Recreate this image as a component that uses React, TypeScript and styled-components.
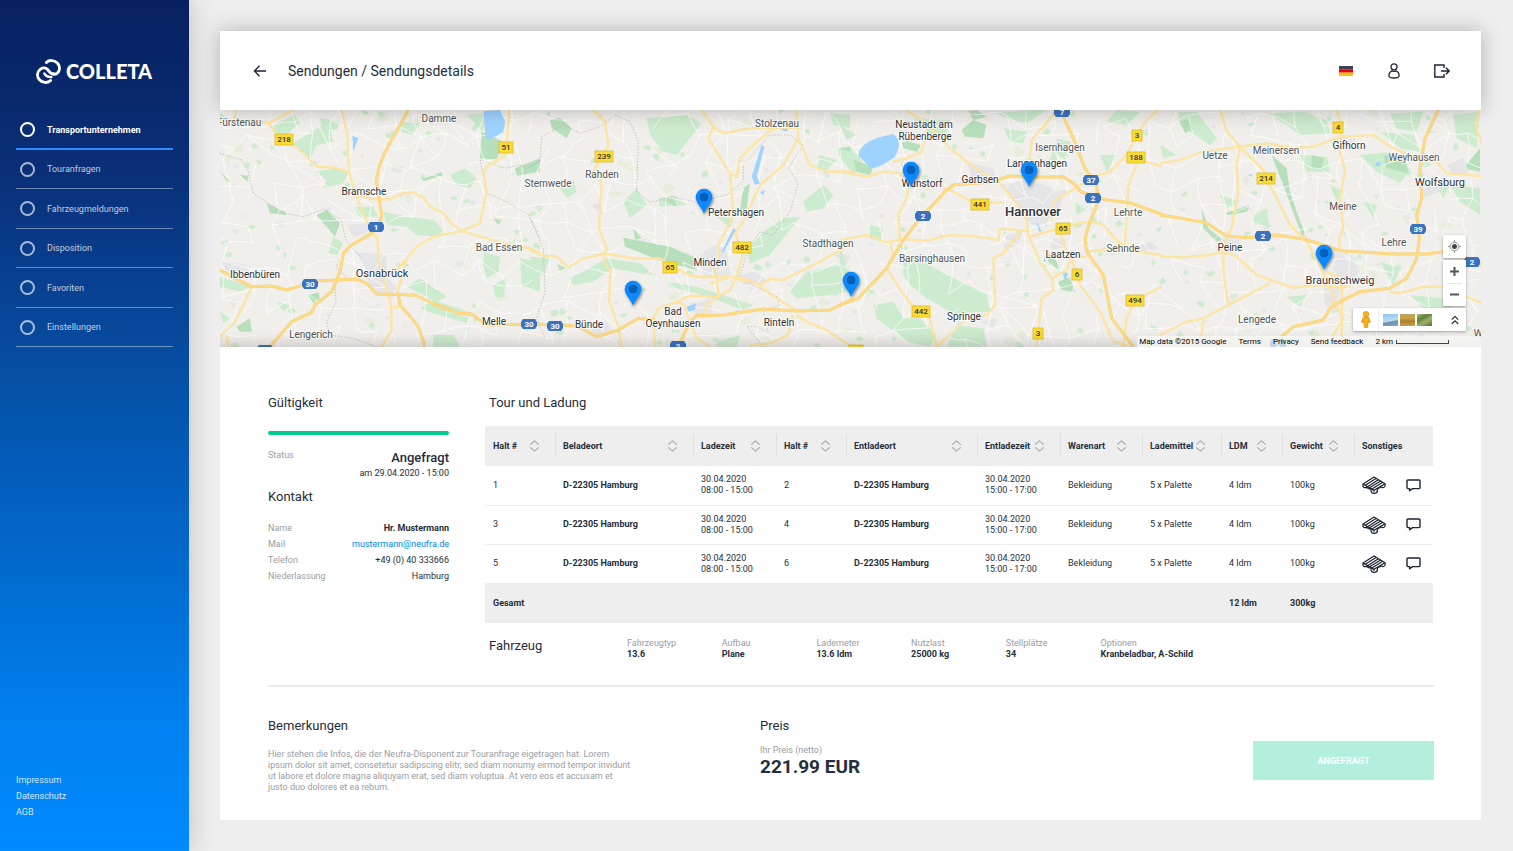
import React from 'react';
import styled, { createGlobalStyle } from 'styled-components';

const GlobalStyle = createGlobalStyle`
  *, *::before, *::after { box-sizing: border-box; }
  body {
    margin: 0;
    background: #eeeeee;
    color: #252e3b;
    font-family: Roboto, "Liberation Sans", sans-serif;
    font-size: 9px;
  }
  button { font: inherit; color: inherit; border: 0; padding: 0; background: none; cursor: pointer; }
  a { color: inherit; text-decoration: none; }
  h1, h2, p, dl, dd, ul { margin: 0; padding: 0; }
`;

/* ---------- frame ---------- */

const Page = styled.div`
  display: flex;
  min-height: 100vh;
`;

const Sidebar = styled.aside`
  flex: 0 0 189px;
  display: flex;
  flex-direction: column;
  padding: 58px 16px 31px;
  color: #fff;
  background: linear-gradient(180deg, #08205f 0%, #0a2f78 20%, #0550a6 45%, #0180f0 85%, #008aff 100%);
  box-shadow: 0 0 26px rgba(0, 0, 0, 0.2);
`;

const Logo = styled.a`
  display: flex;
  align-items: center;
  gap: 5px;
  height: 26px;
  padding-left: 20px;
  font-family: Lato, sans-serif;
  font-weight: 900;
  font-size: 20px;
  line-height: 26px;
`;

const Nav = styled.nav`
  flex: 1;
  display: flex;
  flex-direction: column;
  padding-top: 27px;
`;

const NavItem = styled.a<{ $active?: boolean }>`
  display: flex;
  align-items: center;
  gap: 12px;
  height: ${(p) => (p.$active ? 39 : 40)}px;
  padding-left: 4px;
  font-size: 9px;
  font-weight: ${(p) => (p.$active ? 700 : 400)};
  color: ${(p) => (p.$active ? '#fff' : 'rgba(255,255,255,.75)')};
  border-bottom: ${(p) => (p.$active ? '2px solid #2b8cff' : '1px solid rgba(255,255,255,.4)')};
  &:nth-child(even) { height: 39px; }
`;

const Ring = styled.span<{ $active?: boolean }>`
  width: 15px;
  height: 15px;
  border-radius: 50%;
  border: 2px solid ${(p) => (p.$active ? '#fff' : 'rgba(255,255,255,.65)')};
`;

const LegalLinks = styled.div`
  display: flex;
  flex-direction: column;
  align-items: flex-start;
  font-size: 9px;
  line-height: 16px;
  color: rgba(255, 255, 255, 0.85);
`;

const Main = styled.main`
  flex: 1;
  min-width: 0;
  padding: 31px 32px 31px 31px;
`;

const Card = styled.div`
  background: #fff;
`;

const TopBar = styled.header`
  position: relative;
  z-index: 1;
  display: flex;
  align-items: center;
  height: 79px;
  padding: 0 31px 0 33px;
  background: #fff;
  box-shadow: 0 0 20px rgba(0, 0, 0, 0.25);
`;

const PageTitle = styled.h1`
  flex: 1;
  margin-left: 21px;
  font-size: 14px;
  line-height: 18px;
  font-weight: 400;
`;

const IconButton = styled.button`
  display: grid;
  place-items: center;
`;

const IconRow = styled.div`
  display: flex;
  align-items: center;
  gap: 32px;
  ${IconButton} { width: 16px; }
`;

/* ---------- map ---------- */

const MapFrame = styled.section`
  position: relative;
  height: 237px;
  overflow: hidden;
  background: #f0efeb;
`;

const MapCanvas = styled.svg`
  display: block;
  width: 100%;
  height: 100%;
`;

const MapShade = styled.div`
  position: absolute;
  inset: 0;
  pointer-events: none;
  box-shadow: inset 0 -14px 16px -12px rgba(0, 0, 0, 0.2);
`;

const MapControls = styled.div`
  position: absolute;
  right: 15px;
  bottom: 16px;
  display: flex;
  flex-direction: column;
  align-items: flex-end;
  gap: 2px;
`;

const ControlBox = styled.div`
  display: flex;
  flex-direction: column;
  align-items: center;
  width: 23px;
  background: #fff;
  border-radius: 1px;
  box-shadow: 0 1px 3px rgba(0, 0, 0, 0.35);
`;

const ControlButton = styled.button`
  display: grid;
  place-items: center;
  width: 23px;
  height: 23px;
`;

const ControlRule = styled.span`
  width: 15px;
  height: 1px;
  margin-bottom: -1px;
  background: #e6e6e6;
`;

const LayerBar = styled.div`
  display: flex;
  align-items: center;
  width: 113px;
  height: 23px;
  background: #fff;
  border-radius: 1px;
  box-shadow: 0 1px 3px rgba(0, 0, 0, 0.35);
`;

const PegmanButton = styled(ControlButton)`
  width: 26px;
  border-right: 1px solid #f0f0f0;
`;

const Thumbs = styled.div`
  flex: 1;
  display: flex;
  gap: 2px;
  padding-left: 4px;
`;

const Thumb = styled.button<{ $fill: string }>`
  width: 15px;
  height: 12px;
  background: ${(p) => p.$fill};
`;

const MapCredits = styled.div`
  position: absolute;
  right: 0;
  bottom: 0;
  display: flex;
  align-items: center;
  gap: 12px;
  height: 11px;
  padding: 0 32px 0 2px;
  color: #000;
  font-size: 8px;
  line-height: 11px;
  background: rgba(248, 248, 246, 0.75);
`;

const Scale = styled.span`
  display: flex;
  align-items: center;
  gap: 3px;
  &::after {
    content: '';
    width: 53px;
    height: 4px;
    border: 1px solid #444;
    border-top: 0;
  }
`;

/* ---------- content ---------- */

const Content = styled.div`
  padding: 48px 47px 27px 48px;
`;

const Columns = styled.div`
  display: flex;
  gap: 36px;
`;

const Side = styled.section`
  flex: 0 0 181px;
`;

const TourSection = styled.section`
  flex: 1;
  min-width: 0;
  padding-right: 2px;
`;

const Heading = styled.h2<{ $inset?: boolean }>`
  padding-left: ${(p) => (p.$inset ? 4 : 0)}px;
  font-size: 13px;
  line-height: 16px;
  font-weight: 400;
`;

const ValidityBar = styled.div`
  height: 4px;
  margin: 20px 0 15px;
  border-radius: 2px;
  background: #00cc8f;
`;

const StatusRow = styled.div`
  display: flex;
  justify-content: space-between;
  margin-bottom: 8px;
`;

const Muted = styled.span`
  color: #999da3;
  font-size: 9px;
  line-height: 11px;
`;

const StatusValue = styled.div`
  text-align: right;
  font-size: 9px;
  line-height: 15px;
  strong {
    display: block;
    font-size: 13px;
    line-height: 16px;
    font-weight: 500;
  }
`;

const ContactList = styled.dl`
  margin-top: 15px;
  font-size: 9px;
  line-height: 16px;
  div { display: flex; justify-content: space-between; }
  dt { color: #999da3; }
  a { color: #0084f0; }
  strong { font-weight: 700; }
`;

const Table = styled.table`
  width: 100%;
  margin-top: 15px;
  table-layout: fixed;
  border-collapse: collapse;
  font-size: 9px;
  line-height: 11px;
  text-align: left;
`;

const HeadCell = styled.th`
  position: relative;
  height: 40px;
  padding: 0 0 0 8px;
  white-space: nowrap;
  background: #eeeeee;
  & + &::before {
    content: '';
    position: absolute;
    left: 0;
    top: 8px;
    height: 23px;
    border-left: 1px solid #e0e0e0;
  }
`;

const HeadInner = styled.div`
  display: flex;
  align-items: center;
  justify-content: space-between;
  padding-right: 15px;
`;

const SortButton = styled.button`
  display: block;
  width: 11px;
  height: 12px;
`;

const BodyRow = styled.tr`
  & + & td { border-top: 1px solid #eeeeee; }
`;

const Cell = styled.td<{ $bold?: boolean }>`
  height: 39px;
  padding: 0 0 0 8px;
  font-weight: ${(p) => (p.$bold ? 700 : 400)};
`;

const ActionCell = styled.div`
  display: flex;
  align-items: center;
  gap: 20px;
`;

const TotalCell = styled(Cell)`
  height: 40px;
  font-weight: 700;
  background: #eeeeee;
`;

const Vehicle = styled.div`
  display: flex;
  align-items: flex-start;
  margin-top: 15px;
`;

const VehicleHeading = styled(Heading)`
  flex: 0 0 142px;
`;

const Specs = styled.dl`
  flex: 1;
  display: grid;
  grid-template-columns: repeat(5, 2fr) 7fr;
  font-size: 9px;
  line-height: 11px;
  dt { color: #999da3; }
  dd { font-weight: 700; white-space: nowrap; }
`;

const Bottom = styled.div`
  display: grid;
  grid-template-columns: 492fr 493fr 181px;
  margin-top: 25px;
  padding-top: 31px;
  border-top: 2px solid #ececec;
`;

const Remarks = styled.p`
  max-width: 366px;
  margin-top: 15px;
  color: #999da3;
  font-size: 9px;
  line-height: 11px;
`;

const Price = styled.div`
  display: flex;
  flex-direction: column;
  margin-top: 11px;
  strong {
    font-size: 19px;
    line-height: 22px;
    font-weight: 700;
  }
`;

const RequestButton = styled.button`
  height: 39px;
  margin-top: 23px;
  color: #fff;
  font-size: 9px;
  font-weight: 700;
  background: #b2efdd;
`;

/* ---------- icons ---------- */

const LogoMark = () => (
  <svg width="25" height="25" viewBox="0 0 72 72" fill="none" stroke="#fff" strokeWidth="8.5" strokeLinecap="round" aria-hidden="true">
    <path d="M42 62 C34 70 18 69 10 60 C2 50 3 38 11 31 C18 24 28 25 34 31 C38 36 42 43 50 43" />
    <path d="M30 10 C38 2 54 3 62 12 C70 22 69 34 61 41 C57 45 54 44 50 43" />
    <path d="M24 42 C29 50 35 53 44 52" strokeWidth="7" />
  </svg>
);

const BackIcon = () => (
  <svg width="14" height="12" viewBox="0 0 14 12" fill="none" stroke="#1d2533" strokeWidth="1.4">
    <path d="M13 6 H1.4 M6.6 .8 L1.4 6 L6.6 11.2" />
  </svg>
);

const FlagIcon = () => (
  <svg width="14" height="10" viewBox="0 0 14 10">
    <path fill="#3d4350" d="M0 0h14v3.4H0z" />
    <path fill="#e8000b" d="M0 3.3h14v3.4H0z" />
    <path fill="#ffbe0a" d="M0 6.6h14V10H0z" />
  </svg>
);

const UserIcon = () => (
  <svg width="12" height="16" viewBox="0 0 12 16" fill="none" stroke="#1d2533" strokeWidth="1.3">
    <circle cx="6" cy="3.8" r="3" />
    <path d="M3.8 7.7 C1.8 8.8 .9 10.5 .9 12.5 C.9 14.2 2 15 6 15 C10 15 11.1 14.2 11.1 12.5 C11.1 10.5 10.2 8.8 8.2 7.7 C7 8.5 5 8.5 3.8 7.7Z" />
  </svg>
);

const LogoutIcon = () => (
  <svg width="16" height="14" viewBox="0 0 16 14" fill="none" stroke="#1d2533" strokeWidth="1.4">
    <path d="M10 4 V1 H.8 V13 H10 V10 M7 7 H15 M12 3.8 L15.2 7 L12 10.2" />
  </svg>
);

const SortIcon = () => (
  <svg width="11" height="12" viewBox="0 0 11 12" fill="none" stroke="#a6a6a6" strokeWidth="1.1">
    <path d="M1.2 4.6 L5.5 .9 L9.8 4.6 M1.2 7.4 L5.5 11.1 L9.8 7.4" />
  </svg>
);

const PalletIcon = () => (
  <svg width="24" height="18" viewBox="0 0 72 54" fill="none" stroke="#1d2533" strokeWidth="3.8" strokeLinejoin="round">
    <path d="M3 24 L36 3 L69 23 L36 43 Z" />
    <path d="M10 28 L43 7 M17 32 L49 11 M23 35 L56 15 M30 39 L62 19" />
    <path d="M3 24 V31 C4 35 9 36 13 34 L19 31 M13 34 L22 39 L27 37" />
    <path d="M69 23 V30 C68 35 62 36 58 33 L54 31 M58 33 L46 39" />
    <path d="M27 37 V45 C28 50 33 52 36 52 C41 52 46 49 46 44 V37 M36 42 V47" />
  </svg>
);

const CommentIcon = () => (
  <svg width="15" height="13" viewBox="0 0 15 13" fill="none" stroke="#1d2533" strokeWidth="1.4" strokeLinejoin="round">
    <path d="M2 1 H13 Q14 1 14 2 V8.6 Q14 9.6 13 9.6 H6.6 L3.6 11.8 V9.6 H2 Q1 9.6 1 8.6 V2 Q1 1 2 1Z" />
  </svg>
);

/* ---------- map data ---------- */

// Roads are drawn per map tile, in tile units of a third of a pixel.
type Tile = { x: number; motorways: string[]; roads: string[]; woods: string[]; darkWoods: string[]; towns: string[]; water: string[]; borders: string[] };

const tiles: Tile[] = [
  {
    x: 0,
    motorways: [
      'M565 15C540 70 470 160 470 230L480 300L485 330L475 365L455 385L395 420L370 445L360 500L335 560L285 600L275 622L215 650L150 725',
      'M0 495L45 520L95 545L155 543L200 555L250 540L300 527L410 522L440 535L470 567L585 570L650 600L715 625L755 627L800 660L960 657',
      'M535 570L540 600L575 640L595 665L615 725',
    ],
    roads: [
      'M365 15L382 90L387 200L400 250L440 350L455 385L472 400L476 470L500 550L513 600L515 675L485 725',
      'M0 50L100 45L145 55L220 15M45 15V45M145 55L190 110L230 125L290 185L345 188L385 200',
      'M405 270L470 283L510 283L550 265L580 262L610 278L630 305L665 320L695 355L725 378L800 400L850 415L930 430L960 445',
      'M868 15L865 60L857 150L800 185L790 200L800 260L780 355L725 378L640 395L590 425L560 460L530 570M560 460L530 495L490 505M515 608L540 605',
      'M95 545L75 590L45 650L0 695M20 690L25 725',
    ],
    woods: [
      'M160 60L225 30L240 55L190 95L165 85Z', 'M220 115L300 65L330 70L340 110L290 120L270 165L235 135Z', 'M300 40L360 50L350 75L305 65Z',
      'M285 200L350 190L385 205L370 235L310 250L320 225Z', 'M490 320L560 335L640 345L670 375L655 395L590 390L560 365L500 360Z',
      'M400 305L460 305L475 335L420 335Z', 'M340 395L370 415L350 450L325 445Z', 'M560 545L600 520L640 545L680 575L650 590L590 560Z',
      'M600 610L640 585L760 625L740 655L690 640L640 625Z', 'M790 440L840 455L835 500L800 520L790 480Z', 'M900 460L960 470V560L905 540Z',
      'M0 515L90 545L60 560L0 545Z', 'M540 50L600 55L575 90L545 80Z', 'M760 60L800 20L790 80Z', 'M690 210L735 190L770 220L750 250L710 240Z',
      'M0 620L30 640L10 655Z', 'M740 30L790 25L780 70Z', 'M820 540L860 520L850 580L825 575Z', 'M170 590L210 600L190 620Z', 'M640 690L700 690L720 725H640Z',
    ],
    darkWoods: [
      'M290 330L320 315L360 355L345 395Z', 'M140 295L195 320L200 330L150 325Z', 'M785 80L850 110L830 165L780 160Z', 'M605 222L665 202L668 212L610 228Z',
      'M265 570L295 562L300 580L280 595Z', 'M50 665L90 640L95 680L60 680Z', 'M0 200L28 225L25 235Z', 'M885 190L960 160V200L890 212Z', 'M60 210L85 212L82 230Z', 'M820 340L845 345L835 360Z',
    ],
    towns: ['M440 520L500 515L540 560L520 580L470 565Z', 'M380 360L450 355L440 385L400 395Z', 'M515 180L550 185L540 205L515 200Z', 'M0 465L80 480L90 510L20 500Z', 'M400 440L500 450L500 500L450 510Z'],
    water: ['M790 18L840 15L855 50L850 80L810 105L797 100Z', 'M397 92L415 98L400 140Z'],
    borders: ['M0 145L65 165L85 200L100 265L190 325L250 335L310 312L365 345L375 400L420 455M355 460L350 490L380 515L345 535L348 590L320 650L330 690L400 700L470 725M780 165L800 265L860 290L930 335L960 400M780 165L855 190L900 180L920 190L960 165'],
  },
  {
    x: 310,
    motorways: [
      'M0 657L140 662L200 695L265 675L325 640L370 645',
      'M445 725L480 650L500 632L580 630L700 612L800 618L900 615L970 582',
    ],
    roads: [
      'M190 15L225 50L235 120L195 190L215 235L207 370L230 430L220 465L240 500L238 590L265 665L275 725',
      'M0 435L40 452L80 455L115 487L160 460L225 445L310 460L390 460L440 490L480 512L520 517L590 515L640 520L690 540L720 522L760 525L850 480L940 430',
      'M375 725L370 640L385 610L440 590L480 572L565 575L560 520L548 480M565 575L600 555L620 515M565 575L530 600L520 640M440 590L462 600L480 650L500 700L540 725',
      'M515 15L550 65L535 100L600 205L610 330L565 420V465M550 65L580 85L660 70L735 68H805M800 15L805 100L840 180L890 200H970',
      'M600 205L620 215L630 160L680 110L735 68M805 100L760 180L720 215L690 240L640 350L615 385L640 440L620 515',
      'M540 535L600 515L650 530M685 540L740 580L800 618M800 630L830 650L890 675L965 725M790 630L775 690L720 715L660 720',
    ],
    woods: [
      'M350 40L470 30L515 55L480 100L440 150L400 140L360 90Z', 'M115 520L160 500L230 460L330 475L370 510L330 505L250 490L190 530L130 540Z',
      'M650 440L700 380L760 340L810 335L760 400L720 450L660 475Z', 'M820 290L880 240L910 270L880 310L830 320Z', 'M280 290L320 250L350 300L300 340Z',
      'M780 560L830 500L930 480L960 490V560L900 570L800 580Z', 'M870 150L920 165L890 195L855 190Z', 'M0 455L60 460L40 510L0 505Z',
      'M410 530L500 545L640 590L670 600L640 615L520 570L420 545Z', 'M560 335L610 340L600 370Z', 'M90 250L130 225L140 260L110 280Z', 'M385 280L430 270L470 300L390 305Z', 'M560 710L630 690L620 725H560Z', 'M900 25L960 30V70L910 60Z',
    ],
    darkWoods: ['M280 398L420 425L500 460L500 495L400 470L285 425Z', 'M60 45L90 38L125 70L110 100L65 70Z', 'M925 130L960 125V160L930 155Z', 'M310 370L335 400L315 405Z', 'M395 285L430 278L440 305Z', 'M640 250L660 235L650 310L630 320Z', 'M82 478L110 490L90 500Z'],
    towns: ['M510 450L550 420L590 430L600 510L520 515Z', 'M480 600L540 580L550 630L500 635Z', 'M160 650L230 650L250 680L200 690Z', 'M180 300L215 295L215 325Z', 'M900 440L960 450L950 480Z', 'M630 510L670 500L720 530L640 540Z'],
    water: ['M470 605L498 595L495 615L475 620Z', 'M695 120L665 215L675 240L690 235L680 215L703 125Z', 'M610 370L575 440L580 442L618 375Z', 'M755 65L775 70L770 80L755 75Z', 'M690 262L705 255L700 270Z'],
    borders: ['M0 185L30 170L35 95L100 60L150 85L210 65L255 30L300 50L325 110L320 260L360 292L430 275L500 293L590 270L640 230L640 180L720 90L780 90L820 120L775 190L805 235L780 320L730 390L690 380L650 440L640 480L625 520L740 575L750 600L700 620L715 680L680 665L650 665L700 725M0 340L40 430L45 560L20 640L45 700'],
  },
  {
    x: 620,
    motorways: [
      'M0 600L55 580L140 490L190 405L240 340L320 255L340 240L465 230L505 213L570 217L670 215L700 235L725 262L800 285L870 293L970 330',
      'M640 30L650 15M670 35L700 100L735 190L770 240L775 290L750 350L735 400L740 440L790 510L815 640L880 725',
    ],
    roads: [
      'M645 25L575 105L565 215M635 350L640 290L680 265L760 215L810 200L860 150L890 90L920 45L955 15',
      'M0 200L80 215L130 200L180 205L205 240L200 280L175 330L180 400M195 15L240 40L265 60L330 130L400 185L480 235L530 295L560 345L565 390M265 60L245 140L200 160L160 170',
      'M310 250L340 260L390 288L430 293H490M0 405L80 390L140 412L190 402L260 407L330 390L400 393L475 405L480 370L560 378',
      'M570 395L640 375L680 360L755 350L790 360L835 410L865 430M740 440L830 430L965 450',
      'M545 375L490 445L460 460L465 600L440 630L380 640L330 690L290 725M150 410L160 450L140 490L185 560L215 600L265 620L290 725',
      'M565 390L600 470L635 520L640 555L605 580L590 725M635 520L680 495L695 460L740 455M660 380L675 430L695 460L720 540L780 620L820 710',
      'M890 180L865 240L855 420M965 545L885 585L860 640L850 725M900 165L965 185M820 710L860 720',
    ],
    woods: [
      'M190 470L230 460L320 510L400 550L440 570L450 620L340 625L260 580L210 540L190 510Z', 'M100 600L160 590L190 640L240 640L290 690L270 725L200 710L110 640Z',
      'M0 130L60 150L70 190L40 205L0 160Z', 'M470 25L560 15H620L560 55L500 40Z', 'M490 70L560 80L550 115L510 110Z', 'M650 100L690 110L680 165L650 150Z',
      'M350 660L430 670L440 725H320Z', 'M0 420L20 490L60 540L0 560Z', 'M220 40L330 45L320 90L270 90Z', 'M830 15L900 20L860 60L800 50Z', 'M640 130L660 180L630 165Z', 'M0 60L50 90L20 105Z', 'M705 290L745 310L710 330Z', 'M90 360L130 370L120 410L90 400Z', 'M780 150L830 150L800 200Z',
    ],
    darkWoods: ['M365 75L400 45L440 60L430 100L375 95Z', 'M185 105L245 120L230 140L190 130Z', 'M40 165L100 185L90 210L50 200Z', 'M655 530L690 515L705 560L665 555Z', 'M620 440L650 470L660 500L625 470Z', 'M385 18L410 15L440 35L400 45Z'],
    towns: ['M380 170L460 190L470 225L400 230Z', 'M480 240L570 225L640 250L640 330L600 370L560 350L520 280Z', 'M500 390L550 380L530 420L490 440Z', 'M610 270L650 260L680 250L650 330Z', 'M640 400L680 405L670 430L630 430Z', 'M180 210L240 210L240 235L195 240Z', 'M870 430L930 410L960 430L900 445Z', 'M420 650L470 640L460 670Z'],
    water: ['M55 150Q60 105 160 87Q190 110 165 155Q110 195 90 188Z', 'M668 500L685 505L675 530Z', 'M588 345L605 380H598Z', 'M615 455L610 470L617 470Z'],
    borders: [],
  },
  {
    x: 940,
    motorways: [
      'M0 330L135 352L200 393L260 398L350 390L430 402L490 420L540 437L700 447L800 447L870 437L990 490',
      'M835 15L795 100L780 190L785 280L770 330L778 400L770 460L740 520L690 550L600 560L540 590L510 610L490 645L400 665L365 695',
    ],
    roads: [
      'M180 15L200 80L240 125L310 195L330 240L360 300L390 360L440 410L480 480L500 530L520 570L515 605',
      'M0 175L60 165L130 140L240 125L320 115L400 130L460 125L540 95L640 90L700 130L760 155L830 170L860 205L990 215',
      'M240 130L230 180L235 260L215 370L200 395L190 440L190 500L205 600M530 15L545 60L535 120L555 195L540 280L550 370L538 400V437',
      'M0 455L70 457L150 450L190 440L230 455L290 510L400 548L480 540L540 548L570 545M690 560L720 565L790 545L850 545L990 605',
      'M0 690L80 650L130 640L205 600L330 535M130 640L120 725M545 550V725M500 500L540 520L545 550M955 15L950 70L965 115M520 590L550 640L500 725',
    ],
    woods: [
      'M55 20L110 20L170 100L150 120L60 60Z', 'M320 25L430 20L500 45L510 85L420 90L380 60Z', 'M690 25L790 20L770 80L710 70Z', 'M420 150L500 155L510 200L440 200Z',
      'M600 150L700 140L750 195L720 235L650 200Z', 'M880 30L960 20L950 130L890 100Z', 'M660 80L760 90L780 140L720 130Z', 'M750 570L850 580L910 640L800 620Z',
      'M280 330L320 310L330 370L280 350Z', 'M820 220L870 240L850 280Z', 'M0 120L50 150L10 160Z', 'M660 470L720 490L700 540Z', 'M510 240L550 260L530 290Z', 'M380 575L440 570L420 605Z', 'M180 270L240 290L200 310Z', 'M870 240L960 250V330L900 290Z', 'M610 290L650 300L640 340Z',
    ],
    darkWoods: ['M335 150L380 190L390 260L410 320L440 400L425 390L395 310L370 240L350 190Z', 'M125 310L145 370L190 405L170 410L130 370Z', 'M455 150L490 160L485 195L455 190Z', 'M670 150L735 155L745 205L680 190Z', 'M910 190L960 130V200Z', 'M195 325L270 300L260 320L205 330Z', 'M60 50L80 42L100 70L75 85Z'],
    towns: ['M530 440L580 450L600 500L560 540L520 500Z', 'M490 550L540 545L530 620L495 600Z', 'M860 180L910 160L930 210L880 210Z', 'M780 250L850 215L840 260L790 280Z', 'M180 400L240 405L230 440L190 440Z', 'M520 95L590 100L560 130Z'],
    water: ['M650 172L662 170L658 184L645 182Z', 'M265 210L277 206L274 215Z'],
    borders: [],
  },
];

const MAP_W = 1261;
const MAP_H = 237;

const seeded = (seed: number) => () => {
  seed = (seed * 16807) % 2147483647;
  return seed / 2147483647;
};

// Minor lanes: neighbouring villages on a jittered grid joined by bent lines.
const lanes = (() => {
  const rnd = seeded(4711);
  const step = 21;
  const cols = Math.ceil(MAP_W / step) + 2;
  const rows = Math.ceil(MAP_H / step) + 2;
  const at: number[][][] = [];
  for (let r = 0; r < rows; r++) {
    at.push([]);
    for (let c = 0; c < cols; c++) at[r].push([(c - 0.5 + (rnd() - 0.5) * 0.9) * step, (r - 0.5 + (rnd() - 0.5) * 0.9) * step]);
  }
  const d: string[] = [];
  const join = (a: number[], b: number[]) => {
    const mx = (a[0] + b[0]) / 2 + (rnd() - 0.5) * 8;
    const my = (a[1] + b[1]) / 2 + (rnd() - 0.5) * 8;
    d.push(`M${a[0].toFixed(1)} ${a[1].toFixed(1)}Q${mx.toFixed(1)} ${my.toFixed(1)} ${b[0].toFixed(1)} ${b[1].toFixed(1)}`);
  };
  for (let r = 0; r < rows - 1; r++)
    for (let c = 0; c < cols - 1; c++) {
      if (rnd() < 0.55) join(at[r][c], at[r][c + 1]);
      if (rnd() < 0.55) join(at[r][c], at[r + 1][c]);
      if (rnd() < 0.12) join(at[r][c], at[r + 1][c + 1]);
    }
  return d.join('');
})();

const patches = (seed: number, count: number, size: number) => {
  const rnd = seeded(seed);
  let d = '';
  for (let i = 0; i < count; i++) {
    const cx = rnd() * MAP_W;
    const cy = rnd() * MAP_H;
    const n = 4 + Math.floor(rnd() * 3);
    for (let k = 0; k < n; k++) {
      const r = size * (0.4 + rnd());
      const t = (k / n) * Math.PI * 2;
      d += `${k ? 'L' : 'M'}${(cx + Math.cos(t) * r).toFixed(1)} ${(cy + Math.sin(t) * r * 0.8).toFixed(1)}`;
    }
    d += 'Z';
  }
  return d;
};

const copses = patches(99, 170, 4);
const hamlets = patches(1234, 90, 3);
const meadows = patches(777, 50, 6);

// Villages carry no size; towns and cities give their own.
type Place = [string, number, number, number?, number?];
const places: Place[] = [
  ['Fürstenau', 19, 16], ['Damme', 219, 12], ['Bramsche', 144, 85, 10], ['Osnabrück', 162, 167, 11], ['Ibbenbüren', 35, 168, 10],
  ['Lengerich', 91, 228], ['Melle', 274, 215, 10], ['Bad Essen', 279, 141], ['Stemwede', 328, 77], ['Rahden', 382, 68],
  ['Stolzenau', 557, 17], ['Petershagen', 516, 106, 10], ['Minden', 490, 156, 10], ['Bad', 453, 205, 10], ['Oeynhausen', 453, 217, 10],
  ['Bünde', 369, 218, 10], ['Rinteln', 559, 216, 10], ['Stadthagen', 608, 137], ['Neustadt am', 704, 18, 10], ['Rübenberge', 705, 30, 10],
  ['Wunstorf', 702, 77, 10], ['Garbsen', 760, 73, 10], ['Langenhagen', 817, 57, 10], ['Isernhagen', 840, 41], ['Hannover', 813, 106, 13, 500],
  ['Barsinghausen', 712, 152], ['Laatzen', 843, 148, 10], ['Springe', 744, 210, 10], ['Lehrte', 908, 106], ['Sehnde', 903, 142],
  ['Uetze', 995, 49], ['Meinersen', 1056, 44], ['Gifhorn', 1129, 39, 10], ['Weyhausen', 1194, 51], ['Wolfsburg', 1220, 76, 11],
  ['Meine', 1123, 100], ['Peine', 1010, 141, 10], ['Lehre', 1174, 136], ['Braunschweig', 1120, 174, 11], ['Lengede', 1037, 213], ['Wolfenbüttel', 1282, 227],
];

const yellowSigns: [string, number, number][] = [
  ['218', 64, 29], ['51', 286, 37], ['239', 384, 46], ['482', 522, 137], ['65', 450, 157], ['441', 760, 94], ['65', 843, 118],
  ['3', 917, 25], ['188', 916, 47], ['6', 857, 164], ['442', 701, 201], ['494', 915, 190], ['3', 818, 223], ['4', 1118, 17], ['214', 1046, 68], ['83', 636, 240],
];

const blueSigns: [string, number, number][] = [
  ['1', 156, 117], ['30', 90, 174], ['30', 309, 214], ['30', 335, 216], ['2', 458, 236], ['1', 45, 240], ['7', 842, 2], ['37', 871, 70],
  ['2', 873, 88], ['2', 703, 106], ['2', 1043, 126], ['39', 1198, 119], ['2', 1252, 152], ['2', 1058, 234],
];

const pins: [number, number][] = [[484, 104], [413, 196], [631, 187], [691, 77], [809, 77], [1104, 160]];

const TourMap = () => (
  <MapCanvas viewBox={`0 0 ${MAP_W} ${MAP_H}`} preserveAspectRatio="xMidYMid slice" role="img" aria-label="Karte">
    <defs>
      <filter id="pinShadow" x="-50%" y="-30%" width="220%" height="180%">
        <feDropShadow dx="1" dy="1.5" stdDeviation="1.4" floodColor="#000" floodOpacity=".5" />
      </filter>
    </defs>
    <rect width={MAP_W} height={MAP_H} fill="#f0efeb" />
    <path d={meadows} fill="#e7ecdb" />
    <path d={copses} fill="#cfecd0" />
    <path d={hamlets} fill="#e6e6e8" />
    {tiles.map((t) => (
      <g key={t.x} transform={`translate(${t.x} -5) scale(.33333)`}>
        <path d={t.woods.join('')} fill="#cdebcf" />
        <path d={t.darkWoods.join('')} fill="#b7dfbb" />
        <path d={t.towns.join('')} fill="#e5e5e7" />
      </g>
    ))}
    <path d={lanes} fill="none" stroke="#fff" strokeOpacity=".9" strokeWidth=".8" />
    {tiles.map((t) => (
      <g key={t.x} transform={`translate(${t.x} -5) scale(.33333)`} fill="none" strokeLinejoin="round">
        <path d={t.water.join('')} fill="#9fd3ff" />
        <path d={t.borders.join('')} stroke="#b4b6b8" strokeWidth="2.5" strokeDasharray="4 5" />
        <path d={t.roads.join('')} stroke="#fadf9a" strokeWidth="6.5" />
        <path d={t.roads.join('')} stroke="#ffe7a3" strokeWidth="4" />
        <path d={t.motorways.join('')} stroke="#f7cd74" strokeWidth="9" />
        <path d={t.motorways.join('')} stroke="#ffdc84" strokeWidth="6" />
      </g>
    ))}
    {yellowSigns.map(([n, x, y]) => (
      <g key={`${n}-${x}`}>
        <rect x={x - (n.length * 2 + 3)} y={y - 5} width={n.length * 4 + 6} height="11" fill="#fbdc35" stroke="#dcb92c" strokeWidth=".8" />
        <text x={x} y={y + 3} textAnchor="middle" fontSize="8" fontWeight="500" fill="#333">{n}</text>
      </g>
    ))}
    {blueSigns.map(([n, x, y]) => (
      <g key={`${n}-${x}`}>
        <path d={`M${x - 6} ${y - 5}H${x + 6}L${x + 8} ${y - 2}V${y + 2}L${x + 6} ${y + 5}H${x - 6}L${x - 8} ${y + 2}V${y - 2}Z`} fill="#3a72c2" />
        <text x={x} y={y + 3} textAnchor="middle" fontSize="8" fontWeight="700" fill="#fff">{n}</text>
      </g>
    ))}
    {places.map(([name, x, y, size, weight = 400]) => (
      <text key={name} x={x} y={y} textAnchor="middle" fontSize={size ?? 10} fontWeight={weight} fill={size ? '#2c3034' : '#4f5459'} stroke="#fff" strokeOpacity=".8" strokeWidth="2" paintOrder="stroke">{name}</text>
    ))}
    {pins.map(([x, y]) => (
      <g key={x} transform={`translate(${x} ${y})`}>
        <path d="M0 0C-1.5 -6 -8.3 -11 -8.3 -17A8.3 8.3 0 0 1 8.3 -17C8.3 -11 1.5 -6 0 0Z" fill="#0788ff" filter="url(#pinShadow)" />
        <circle cy="-17" r="4" fill="#0561b8" stroke="#04509a" strokeWidth=".6" />
      </g>
    ))}
  </MapCanvas>
);

/* ---------- page data ---------- */

const navItems = ['Transportunternehmen', 'Touranfragen', 'Fahrzeugmeldungen', 'Disposition', 'Favoriten', 'Einstellungen'];

const columns: [string, number][] = [
  ['Halt #', 70], ['Beladeort', 138], ['Ladezeit', 83], ['Halt #', 70], ['Entladeort', 131], ['Entladezeit', 83],
  ['Warenart', 82], ['Lademittel', 79], ['LDM', 61], ['Gewicht', 72], ['Sonstiges', 79],
];

const specs = [
  ['Fahrzeugtyp', '13.6'], ['Aufbau', 'Plane'], ['Lademeter', '13.6 ldm'], ['Nutzlast', '25000 kg'], ['Stellplätze', '34'], ['Optionen', 'Kranbeladbar, A-Schild'],
];

export default function App() {
  return (
    <>
      <GlobalStyle />
      <Page>
        <Sidebar>
          <Logo href="#"><LogoMark />COLLETA</Logo>
          <Nav>
            {navItems.map((item, i) => (
              <NavItem key={item} href="#" $active={i === 0}><Ring $active={i === 0} />{item}</NavItem>
            ))}
          </Nav>
          <LegalLinks>
            <a href="#">Impressum</a>
            <a href="#">Datenschutz</a>
            <a href="#">AGB</a>
          </LegalLinks>
        </Sidebar>
        <Main>
          <Card>
            <TopBar>
              <IconButton aria-label="Zurück"><BackIcon /></IconButton>
              <PageTitle>Sendungen / Sendungsdetails</PageTitle>
              <IconRow>
                <IconButton aria-label="Sprache"><FlagIcon /></IconButton>
                <IconButton aria-label="Profil"><UserIcon /></IconButton>
                <IconButton aria-label="Abmelden"><LogoutIcon /></IconButton>
              </IconRow>
            </TopBar>

            <MapFrame>
              <TourMap />
              <MapShade />
              <MapCredits>
                <span>Map data ©2015 Google</span>
                <a href="#">Terms</a>
                <a href="#">Privacy</a>
                <a href="#">Send feedback</a>
                <Scale>2 km</Scale>
              </MapCredits>
              <MapControls>
                <ControlBox>
                  <ControlButton aria-label="Standort">
                    <svg width="13" height="13" viewBox="0 0 13 13" fill="none" stroke="#777" strokeWidth=".8">
                      <circle cx="6.5" cy="6.5" r="4.3" />
                      <circle cx="6.5" cy="6.5" r="2.5" fill="#444" stroke="none" />
                      <path d="M6.5 0V2M6.5 11V13M0 6.5H2M11 6.5H13" />
                    </svg>
                  </ControlButton>
                </ControlBox>
                <ControlBox>
                  <ControlButton aria-label="Vergrößern">
                    <svg width="9" height="9" viewBox="0 0 9 9" stroke="#555" strokeWidth="2"><path d="M0 4.5H9M4.5 0V9" /></svg>
                  </ControlButton>
                  <ControlRule />
                  <ControlButton aria-label="Verkleinern">
                    <svg width="9" height="9" viewBox="0 0 9 9" stroke="#555" strokeWidth="2"><path d="M0 4.5H9" /></svg>
                  </ControlButton>
                </ControlBox>
                <LayerBar>
                  <PegmanButton aria-label="Street View">
                    <svg width="10" height="17" viewBox="0 0 10 17" fill="#f5b21a" stroke="#cf8a12" strokeWidth=".6">
                      <path d="M2 6.5Q5 5.2 8 6.5L9.4 11.2L8 11.8L7.2 10L6.8 16.4H3.2L2.8 10L2 11.8L.6 11.2Z" />
                      <circle cx="5" cy="3.2" r="2.8" />
                    </svg>
                  </PegmanButton>
                  <Thumbs>
                    <Thumb aria-label="Küste" $fill="linear-gradient(170deg, #8fc4ee 0%, #b9dcf3 55%, #6f93ad 65%, #8aa6b8 100%)" />
                    <Thumb aria-label="Feld" $fill="linear-gradient(180deg, #b9a768 0%, #c9a23f 35%, #a9822f 60%, #c9a04a 100%)" />
                    <Thumb aria-label="Wald" $fill="linear-gradient(150deg, #a9bd83 0%, #5f8138 35%, #9fb06f 60%, #4f7030 100%)" />
                  </Thumbs>
                  <ControlButton aria-label="Einklappen">
                    <svg width="8" height="10" viewBox="0 0 8 10" fill="none" stroke="#333" strokeWidth="1.3"><path d="M.8 4.6L4 1.4L7.2 4.6M.8 9L4 5.8L7.2 9" /></svg>
                  </ControlButton>
                </LayerBar>
              </MapControls>
            </MapFrame>

            <Content>
              <Columns>
                <Side>
                  <Heading>Gültigkeit</Heading>
                  <ValidityBar />
                  <StatusRow>
                    <Muted>Status</Muted>
                    <StatusValue><strong>Angefragt</strong>am 29.04.2020 - 15:00</StatusValue>
                  </StatusRow>
                  <Heading>Kontakt</Heading>
                  <ContactList>
                    <div><dt>Name</dt><dd><strong>Hr. Mustermann</strong></dd></div>
                    <div><dt>Mail</dt><dd><a href="mailto:mustermann@neufra.de">mustermann@neufra.de</a></dd></div>
                    <div><dt>Telefon</dt><dd>+49 (0) 40 333666</dd></div>
                    <div><dt>Niederlassung</dt><dd>Hamburg</dd></div>
                  </ContactList>
                </Side>

                <TourSection>
                  <Heading $inset>Tour und Ladung</Heading>
                  <Table>
                    <colgroup>
                      {columns.map(([name, width], i) => <col key={name + i} width={width} />)}
                    </colgroup>
                    <thead>
                      <tr>
                        {columns.map(([name], i) => (
                          <HeadCell key={name + i} scope="col">
                            <HeadInner>
                              {name}
                              {i < columns.length - 1 && <SortButton aria-label={`${name} sortieren`}><SortIcon /></SortButton>}
                            </HeadInner>
                          </HeadCell>
                        ))}
                      </tr>
                    </thead>
                    <tbody>
                      {[1, 3, 5].map((n) => (
                        <BodyRow key={n}>
                          <Cell>{n}</Cell>
                          <Cell $bold>D-22305 Hamburg</Cell>
                          <Cell>30.04.2020<br />08:00 - 15:00</Cell>
                          <Cell>{n + 1}</Cell>
                          <Cell $bold>D-22305 Hamburg</Cell>
                          <Cell>30.04.2020<br />15:00 - 17:00</Cell>
                          <Cell>Bekleidung</Cell>
                          <Cell>5 x Palette</Cell>
                          <Cell>4 ldm</Cell>
                          <Cell>100kg</Cell>
                          <Cell>
                            <ActionCell>
                              <IconButton aria-label="Palette"><PalletIcon /></IconButton>
                              <IconButton aria-label="Kommentar"><CommentIcon /></IconButton>
                            </ActionCell>
                          </Cell>
                        </BodyRow>
                      ))}
                    </tbody>
                    <tfoot>
                      <tr>
                        <TotalCell colSpan={8}>Gesamt</TotalCell>
                        <TotalCell>12 ldm</TotalCell>
                        <TotalCell colSpan={2}>300kg</TotalCell>
                      </tr>
                    </tfoot>
                  </Table>
                  <Vehicle>
                    <VehicleHeading $inset>Fahrzeug</VehicleHeading>
                    <Specs>
                      {specs.map(([k, v]) => <div key={k}><dt>{k}</dt><dd>{v}</dd></div>)}
                    </Specs>
                  </Vehicle>
                </TourSection>
              </Columns>

              <Bottom>
                <section>
                  <Heading>Bemerkungen</Heading>
                  <Remarks>
                    Hier stehen die Infos, die der Neufra-Disponent zur Touranfrage eigetragen hat. Lorem ipsum dolor sit amet, consetetur
                    sadipscing elitr, sed diam nonumy eirmod tempor invidunt ut labore et dolore magna aliquyam erat, sed diam voluptua. At
                    vero eos et accusam et justo duo dolores et ea rebum.
                  </Remarks>
                </section>
                <section>
                  <Heading>Preis</Heading>
                  <Price><Muted>Ihr Preis (netto)</Muted><strong>221.99 EUR</strong></Price>
                </section>
                <RequestButton>ANGEFRAGT</RequestButton>
              </Bottom>
            </Content>
          </Card>
        </Main>
      </Page>
    </>
  );
}
